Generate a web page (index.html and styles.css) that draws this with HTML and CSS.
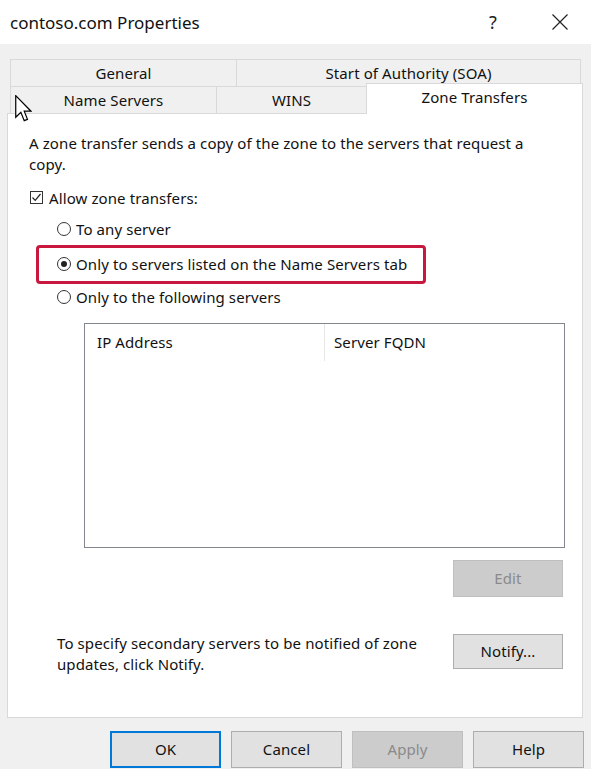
FILE: index.html
```html
<!DOCTYPE html>
<html lang="en">
<head>
<meta charset="utf-8">
<title>contoso.com Properties</title>
<link rel="stylesheet" href="styles.css">
</head>
<body>
<div class="window">
  <div class="titlebar">
    <span class="title">contoso.com Properties</span>
    <div class="title-actions">
      <span class="help-glyph">?</span>
      <svg class="close" width="18" height="18" viewBox="0 0 18 18"><path d="M1.5 1.5 L16.5 16.5 M16.5 1.5 L1.5 16.5"/></svg>
    </div>
  </div>
  <div class="body">
    <div class="tabs">
      <div class="tab-row">
        <div class="tab w-general">General</div>
        <div class="tab w-soa">Start of Authority (SOA)</div>
      </div>
      <div class="tab-row">
        <div class="tab w-ns">Name Servers</div>
        <div class="tab w-wins">WINS</div>
        <div class="tab active w-zt">Zone Transfers</div>
      </div>
    </div>
    <div class="panel">
      <p class="desc">A zone transfer sends a copy of the zone to the servers that request a<br>copy.</p>
      <div class="check-row">
        <span class="checkbox"><svg width="11" height="11" viewBox="0 0 11 11"><path d="M1.5 5.5 L4.2 8.3 L9.5 2"/></svg></span>
        <span>Allow zone transfers:</span>
      </div>
      <div class="radio-row first"><span class="radio"></span><span>To any server</span></div>
      <div class="highlight">
        <div class="radio-row"><span class="radio checked"></span><span>Only to servers listed on the Name Servers tab</span></div>
      </div>
      <div class="radio-row third"><span class="radio"></span><span>Only to the following servers</span></div>
      <div class="listbox">
        <div class="list-header">
          <div class="col col-ip">IP Address</div>
          <div class="col col-fqdn">Server FQDN</div>
        </div>
      </div>
      <div class="edit-row"><button class="btn disabled edit">Edit</button></div>
      <div class="notify-row">
        <p class="notify-text">To specify secondary servers to be notified of zone<br>updates, click Notify.</p>
        <button class="btn notify">Notify...</button>
      </div>
    </div>
    <div class="footer">
      <button class="btn default">OK</button>
      <button class="btn">Cancel</button>
      <button class="btn disabled">Apply</button>
      <button class="btn">Help</button>
    </div>
  </div>
  <svg class="cursor" width="17" height="27" viewBox="0 0 12.5 20"><path d="M0.5 0.5 L0.5 16.5 L4.3 12.8 L6.8 19 L9.2 18 L6.8 12 L11.8 12 Z"/></svg>
</div>
</body>
</html>
```
FILE: styles.css
```css
* { box-sizing: border-box; }
html, body { margin: 0; padding: 0; }
body {
  background: #f0f0f0;
  font-family: "Noto Sans", "Open Sans", sans-serif;
  font-size: 15px;
  letter-spacing: 0.1px;
  color: #111;
}
.window {
  position: relative;
  width: 591px;
  height: 769px;
  overflow: hidden;
  background: #f0f0f0;
}
.titlebar {
  height: 44px;
  background: #fff;
  display: flex;
  align-items: center;
  justify-content: space-between;
  padding-left: 10px;
}
.title { font-size: 17px; letter-spacing: 0; }
.title-actions {
  display: flex;
  align-items: center;
  gap: 54px;
  padding-right: 22px;
}
.help-glyph { font-size: 18px; color: #222; }
.close path { stroke: #222; stroke-width: 1.2; fill: none; }

.body { padding-top: 15px; }
.tabs { padding-left: 10px; }
.tab-row { display: flex; height: 27px; }
.tab {
  height: 27px;
  border: 1px solid #d9d9d9;
  border-bottom: none;
  margin-right: -1px;
  background: #f0f0f0;
  display: flex;
  align-items: center;
  justify-content: center;
  white-space: nowrap;
}
.w-general { width: 227px; }
.w-soa { width: 345px; }
.w-ns { width: 207px; }
.w-wins { width: 151px; }
.w-zt { width: 217px; }
.tab.active {
  background: #fff;
  height: 31px;
  margin-top: -3px;
  margin-bottom: -1px;
  position: relative;
  z-index: 1;
  padding-bottom: 5px;
}

.panel {
  margin-left: 7px;
  width: 576px;
  height: 605px;
  background: #fff;
  border: 1px solid #d9d9d9;
  padding-left: 21px;
  padding-top: 19px;
}
.desc {
  margin: 0;
  line-height: 21px;
  white-space: nowrap;
}
.check-row, .radio-row {
  display: flex;
  align-items: center;
  height: 21px;
  white-space: nowrap;
}
.check-row { margin-top: 12px; gap: 6px; margin-left: 1px; }
.checkbox {
  width: 13px; height: 13px;
  border: 1px solid #333;
  display: flex; align-items: center; justify-content: center;
  background: #fff;
}
.checkbox path { stroke: #222; stroke-width: 1.2; fill: none; }
.radio-row { gap: 5px; margin-left: 28px; }
.radio-row.first { margin-top: 10px; }
.radio {
  width: 14px; height: 14px;
  border: 1px solid #333;
  border-radius: 50%;
  background: #fff;
  display: flex; align-items: center; justify-content: center;
}
.radio.checked::after {
  content: "";
  width: 6px; height: 6px;
  border-radius: 50%;
  background: #222;
}
.highlight {
  margin-top: 6px;
  margin-left: 7px;
  width: 390px;
  height: 39px;
  border: 3px solid #c8183f;
  border-radius: 4px;
  display: flex;
  align-items: center;
  padding-left: 18px;
  padding-bottom: 1px;
}
.highlight .radio-row { margin-left: 0; }
.radio-row.third { margin-top: 2px; }
.listbox {
  margin-top: 16px;
  margin-left: 55px;
  width: 481px;
  height: 225px;
  border: 1px solid #828790;
  background: #fff;
}
.list-header { display: flex; height: 37px; }
.col {
  height: 37px;
  display: flex;
  align-items: center;
  padding-left: 12px;
  padding-bottom: 2px;
  white-space: nowrap;
}
.col-ip { width: 240px; border-right: 1px solid #e5e5e5; }
.col-fqdn { padding-left: 9px; }

.btn {
  font-family: inherit;
  font-size: 15px;
  letter-spacing: 0.1px;
  color: #111;
  background: #e1e1e1;
  border: 1px solid #adadad;
  padding: 0 0 2px 0;
  width: 111px;
  height: 37px;
}
.btn.disabled {
  background: #cccccc;
  border-color: #bfbfbf;
  color: #8a8a8a;
}
.btn.default { border: 2px solid #0078d7; }
.edit-row { margin-top: 12px; padding-left: 424px; }
.edit { width: 110px; }
.notify-row {
  margin-top: 36px;
  display: flex;
  align-items: flex-start;
}
.notify-text {
  margin: 0 0 0 28px;
  line-height: 21px;
  width: 396px;
  white-space: nowrap;
}
.notify { width: 110px; height: 35px; margin-top: 1px; }

.footer {
  margin-top: 13px;
  display: flex;
  justify-content: flex-end;
  gap: 10px;
  padding-right: 7px;
}

.cursor {
  position: absolute;
  left: 15px;
  top: 95px;
  z-index: 5;
}
.cursor path { fill: #fff; stroke: #000; stroke-width: 0.9; stroke-linejoin: miter; }
```
